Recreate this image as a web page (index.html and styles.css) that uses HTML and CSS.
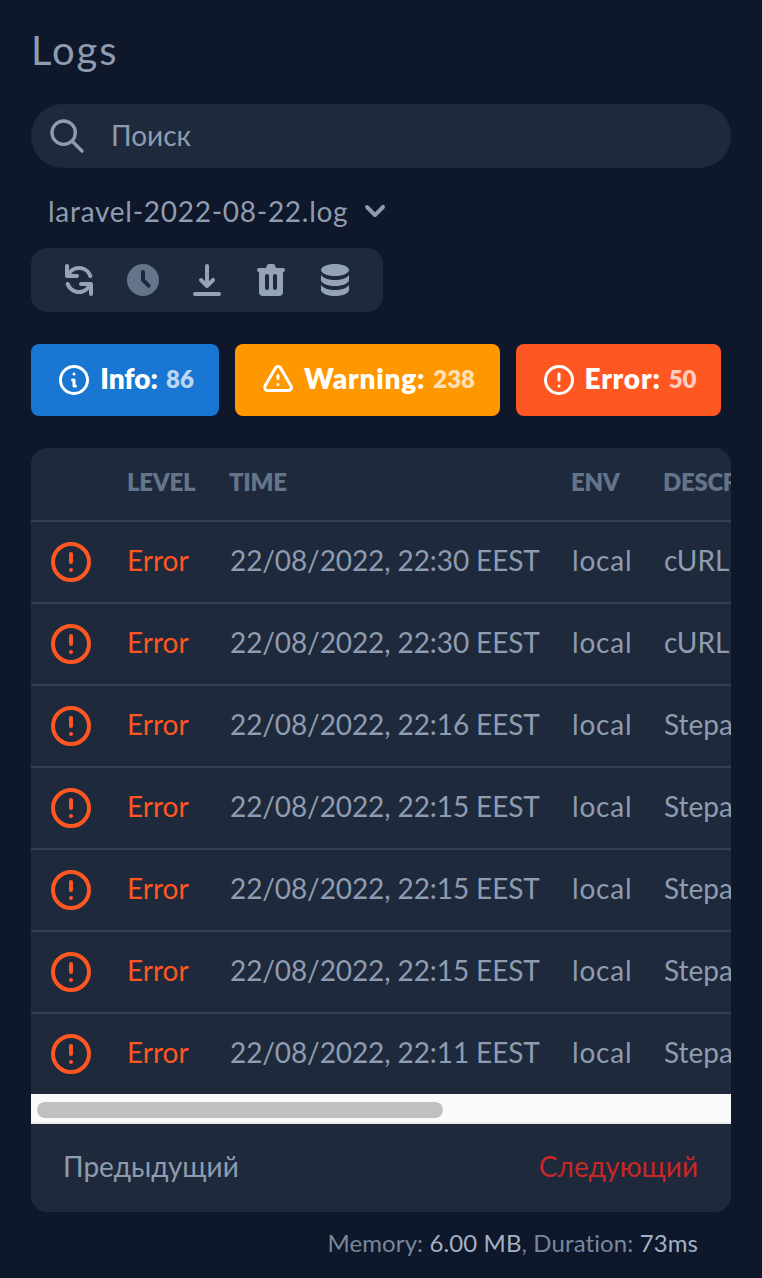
FILE: index.html
```html
<!DOCTYPE html>
<html lang="ru">
<head>
<meta charset="utf-8">
<title>Logs</title>
<link rel="stylesheet" href="styles.css">
</head>
<body>
<main class="page">
  <h1 class="title">Logs</h1>
  <div class="search">
    <svg class="search-icon" viewBox="0 0 24 24" fill="none" stroke="currentColor" stroke-width="2" stroke-linecap="round" stroke-linejoin="round"><path d="M21 21l-6-6m2-5a7 7 0 11-14 0 7 7 0 0114 0z"/></svg>
    <span class="search-text">Поиск</span>
  </div>
  <div class="file">
    <span class="file-name">laravel-2022-08-22.log</span>
    <svg class="chevron" viewBox="0 0 20 20" fill="currentColor"><path d="M5.293 7.293a1 1 0 011.414 0L10 10.586l3.293-3.293a1 1 0 111.414 1.414l-4 4a1 1 0 01-1.414 0l-4-4a1 1 0 010-1.414z"/></svg>
  </div>
  <div class="tools">
    <svg class="tool" viewBox="0 0 20 20" fill="currentColor"><path d="M4 2a1 1 0 011 1v2.101a7.002 7.002 0 0111.601 2.566 1 1 0 11-1.885.666A5.002 5.002 0 005.999 7H9a1 1 0 010 2H4a1 1 0 01-1-1V3a1 1 0 011-1zm.008 9.057a1 1 0 011.276.61A5.002 5.002 0 0014.001 13H11a1 1 0 110-2h5a1 1 0 011 1v5a1 1 0 11-2 0v-2.101a7.002 7.002 0 01-11.601-2.566 1 1 0 01.61-1.276z"/></svg>
    <svg class="tool tool-dim" viewBox="0 0 20 20" fill="currentColor"><path d="M10 18a8 8 0 100-16 8 8 0 000 16zm1-12a1 1 0 10-2 0v4a1 1 0 00.293.707l2.828 2.829a1 1 0 101.415-1.415L11 9.586V6z" fill-rule="evenodd"/></svg>
    <svg class="tool" viewBox="0 0 20 20" fill="currentColor"><path d="M3 17a1 1 0 011-1h12a1 1 0 110 2H4a1 1 0 01-1-1zm3.293-7.707a1 1 0 011.414 0L9 10.586V3a1 1 0 112 0v7.586l1.293-1.293a1 1 0 111.414 1.414l-3 3a1 1 0 01-1.414 0l-3-3a1 1 0 010-1.414z"/></svg>
    <svg class="tool" viewBox="0 0 20 20" fill="currentColor"><path d="M9 2a1 1 0 00-.894.553L7.382 4H4a1 1 0 000 2v10a2 2 0 002 2h8a2 2 0 002-2V6a1 1 0 100-2h-3.382l-.724-1.447A1 1 0 0011 2H9zM7 8a1 1 0 012 0v6a1 1 0 11-2 0V8zm5-1a1 1 0 00-1 1v6a1 1 0 102 0V8a1 1 0 00-1-1z" fill-rule="evenodd"/></svg>
    <svg class="tool" viewBox="0 0 20 20" fill="currentColor"><path d="M3 12v3c0 1.657 3.134 3 7 3s7-1.343 7-3v-3c0 1.657-3.134 3-7 3s-7-1.343-7-3z"/><path d="M3 7v3c0 1.657 3.134 3 7 3s7-1.343 7-3V7c0 1.657-3.134 3-7 3S3 8.657 3 7z"/><path d="M17 5c0 1.657-3.134 3-7 3S3 6.657 3 5s3.134-3 7-3 7 1.343 7 3z"/></svg>
  </div>
  <div class="badges">
    <div class="badge badge-info">
      <svg class="badge-icon" viewBox="0 0 24 24" fill="none" stroke="currentColor" stroke-width="2" stroke-linecap="round" stroke-linejoin="round"><path d="M13 16h-1v-4h-1m1-4h.01M21 12a9 9 0 11-18 0 9 9 0 0118 0z"/></svg>
      <span class="badge-label badge-label-short">Info:</span><span class="badge-count">86</span>
    </div>
    <div class="badge badge-warning">
      <svg class="badge-icon" viewBox="0 0 24 24" fill="none" stroke="currentColor" stroke-width="2" stroke-linecap="round" stroke-linejoin="round"><path d="M12 9v2m0 4h.01m-6.938 4h13.856c1.54 0 2.502-1.667 1.732-3L13.732 4c-.77-1.333-2.694-1.333-3.464 0L3.34 16c-.77 1.333.192 3 1.732 3z"/></svg>
      <span class="badge-label">Warning:</span><span class="badge-count">238</span>
    </div>
    <div class="badge badge-error">
      <svg class="badge-icon" viewBox="0 0 24 24" fill="none" stroke="currentColor" stroke-width="2" stroke-linecap="round" stroke-linejoin="round"><path d="M12 8v4m0 4h.01M21 12a9 9 0 11-18 0 9 9 0 0118 0z"/></svg>
      <span class="badge-label">Error:</span><span class="badge-count">50</span>
    </div>
  </div>
  <section class="panel">
    <div class="table">
      <div class="row row-head">
        <span></span><span>LEVEL</span><span>TIME</span><span>ENV</span><span>DESCRIPTION</span>
      </div>
      <div class="row"><svg class="row-icon" viewBox="0 0 24 24" fill="none" stroke="currentColor" stroke-width="2" stroke-linecap="round" stroke-linejoin="round"><path d="M12 8v4m0 4h.01M21 12a9 9 0 11-18 0 9 9 0 0118 0z"/></svg><span class="level">Error</span><span class="time">22/08/2022, 22:30 EEST</span><span class="env">local</span><span class="desc">cURL error 28: Operation timed out</span></div>
      <div class="row"><svg class="row-icon" viewBox="0 0 24 24" fill="none" stroke="currentColor" stroke-width="2" stroke-linecap="round" stroke-linejoin="round"><path d="M12 8v4m0 4h.01M21 12a9 9 0 11-18 0 9 9 0 0118 0z"/></svg><span class="level">Error</span><span class="time">22/08/2022, 22:30 EEST</span><span class="env">local</span><span class="desc">cURL error 28: Operation timed out</span></div>
      <div class="row"><svg class="row-icon" viewBox="0 0 24 24" fill="none" stroke="currentColor" stroke-width="2" stroke-linecap="round" stroke-linejoin="round"><path d="M12 8v4m0 4h.01M21 12a9 9 0 11-18 0 9 9 0 0118 0z"/></svg><span class="level">Error</span><span class="time">22/08/2022, 22:16 EEST</span><span class="env">local</span><span class="desc">Stepan error message</span></div>
      <div class="row"><svg class="row-icon" viewBox="0 0 24 24" fill="none" stroke="currentColor" stroke-width="2" stroke-linecap="round" stroke-linejoin="round"><path d="M12 8v4m0 4h.01M21 12a9 9 0 11-18 0 9 9 0 0118 0z"/></svg><span class="level">Error</span><span class="time">22/08/2022, 22:15 EEST</span><span class="env">local</span><span class="desc">Stepan error message</span></div>
      <div class="row"><svg class="row-icon" viewBox="0 0 24 24" fill="none" stroke="currentColor" stroke-width="2" stroke-linecap="round" stroke-linejoin="round"><path d="M12 8v4m0 4h.01M21 12a9 9 0 11-18 0 9 9 0 0118 0z"/></svg><span class="level">Error</span><span class="time">22/08/2022, 22:15 EEST</span><span class="env">local</span><span class="desc">Stepan error message</span></div>
      <div class="row"><svg class="row-icon" viewBox="0 0 24 24" fill="none" stroke="currentColor" stroke-width="2" stroke-linecap="round" stroke-linejoin="round"><path d="M12 8v4m0 4h.01M21 12a9 9 0 11-18 0 9 9 0 0118 0z"/></svg><span class="level">Error</span><span class="time">22/08/2022, 22:15 EEST</span><span class="env">local</span><span class="desc">Stepan error message</span></div>
      <div class="row"><svg class="row-icon" viewBox="0 0 24 24" fill="none" stroke="currentColor" stroke-width="2" stroke-linecap="round" stroke-linejoin="round"><path d="M12 8v4m0 4h.01M21 12a9 9 0 11-18 0 9 9 0 0118 0z"/></svg><span class="level">Error</span><span class="time">22/08/2022, 22:11 EEST</span><span class="env">local</span><span class="desc">Stepan error message</span></div>
    </div>
    <div class="scrollbar"><div class="thumb"></div></div>
    <div class="pager"><span>Предыдущий</span><span class="next">Следующий</span></div>
  </section>
  <p class="stats">Memory: <b>6.00 MB</b>, Duration: <b>73ms</b></p>
</main>
</body>
</html>
```
FILE: styles.css
```css
* { box-sizing: border-box; }
html, body { margin: 0; padding: 0; }
body {
  width: 762px;
  height: 1278px;
  overflow: hidden;
  background: #0f172a;
  color: #8f9cb0;
  font-family: "Lato", "Open Sans", "Noto Sans", sans-serif;
  font-size: 28px;
}
.page { padding: 22px 31px 0; }
.title {
  margin: 0;
  height: 56px;
  font-size: 40px;
  line-height: 56px;
  font-weight: 400;
  letter-spacing: 1.9px;
  color: #8f9cb0;
}
.search {
  margin-top: 26px;
  height: 64px;
  border-radius: 32px;
  background: #1e293b;
  display: flex;
  align-items: center;
  padding-left: 16px;
  gap: 24px;
}
.search-icon { width: 40px; height: 40px; flex: none; }
.search-text { padding-bottom: 2px; }
.file {
  margin-top: 24px;
  height: 38px;
  padding-left: 17px;
  display: flex;
  align-items: center;
  gap: 7px;
  line-height: 38px;
}
.file-name { letter-spacing: .73px; }
.chevron { width: 40px; height: 40px; flex: none; }
.tools {
  margin-top: 18px;
  width: 352px;
  height: 64px;
  padding: 0 28px;
  display: flex;
  align-items: center;
  gap: 24px;
  background: #1e293b;
  border-radius: 16px;
}
.tool { width: 40px; height: 40px; flex: none; color: #94a3b8; }
.tool-dim { color: #64748b; }
.badges { margin-top: 32px; display: flex; gap: 16px; }
.badge {
  height: 72px;
  border-radius: 8px;
  display: flex;
  align-items: center;
  justify-content: center;
  gap: 6px;
  color: #fff;
}
.badge-info { width: 188px; background: #1976d2; }
.badge-warning { width: 265px; background: #ff9800; }
.badge-error { width: 205px; background: #ff5722; }
.badge-icon { width: 36px; height: 36px; flex: none; margin-right: 2px; }
.badge-label { font-weight: 800; letter-spacing: .8px; padding-bottom: 4px; }
.badge-label-short { letter-spacing: 0; }
.badge-count { font-size: 24px; font-weight: 800; opacity: .7; margin-left: 2px; padding-bottom: 4px; }
.panel {
  margin-top: 32px;
  width: 700px;
  background: #1e293b;
  border-radius: 16px;
  overflow: hidden;
}
.table { height: 646px; overflow: hidden; }
.row {
  display: grid;
  grid-template-columns: 97px 102px 342px 92px 400px;
  align-items: center;
  height: 82px;
  border-top: 2px solid #334155;
  white-space: nowrap;
}
.row span { padding-bottom: 4px; }
.row-head {
  height: 72px;
  border-top: 0;
  font-size: 24px;
  font-weight: 800;
  letter-spacing: -.3px;
  color: #64748b;
}
.row-head span { padding-bottom: 6px; margin-left: -1px; }
.row-icon { width: 48px; height: 48px; margin-left: 16px; color: #ff5722; }
.row .level { color: #ff5722; margin-left: -1px; }
.time { letter-spacing: -.1px; }
.env { letter-spacing: .8px; }
.scrollbar {
  height: 30px;
  padding: 8px 6px 0;
  background: #fafafa;
  border-bottom: 2px solid #ececec;
}
.thumb { width: 406px; height: 16px; border-radius: 8px; background: #c1c1c1; }
.pager {
  height: 88px;
  padding: 0 33px 0 32px;
  display: flex;
  justify-content: space-between;
  align-items: center;
}
.pager span { padding-bottom: 4px; }
.next { color: #c62828; }
.stats {
  margin: 15px 33px 0 0;
  font-size: 24px;
  line-height: 32px;
  letter-spacing: .1px;
  text-align: right;
  color: #77879e;
}
.stats b { font-weight: 400; color: #a3b1c5; }
```
